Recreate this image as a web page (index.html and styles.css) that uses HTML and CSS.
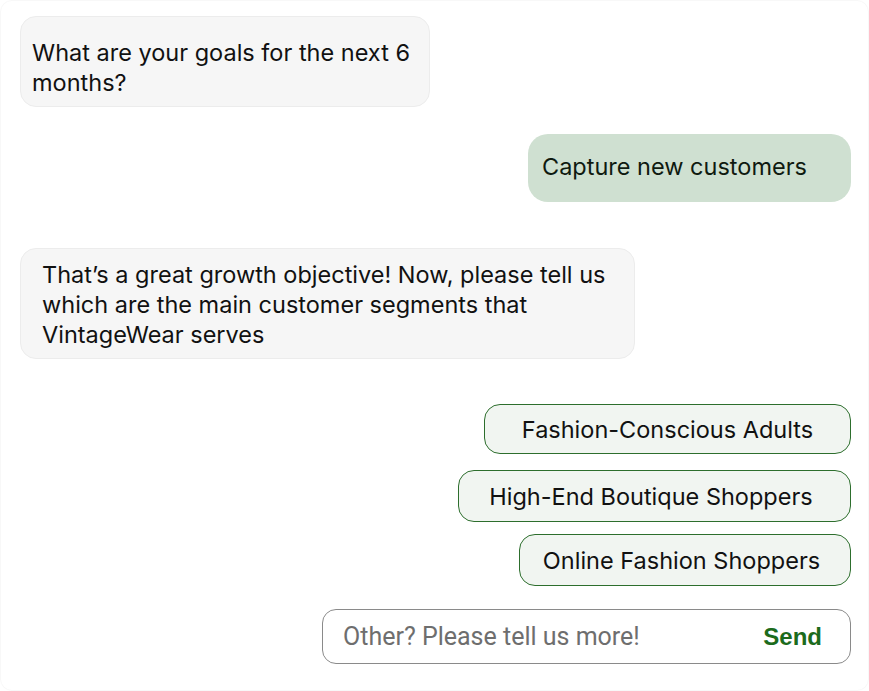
FILE: index.html
```html
<!DOCTYPE html>
<html>
<head>
<meta charset="utf-8">
<link rel="stylesheet" href="styles.css">
</head>
<body>
<div class="chat">
  <div class="msg bot bot-1">What are your goals for the next 6 months?</div>
  <div class="msg user">Capture new customers</div>
  <div class="msg bot bot-2">That’s a great growth objective! Now, please tell us which are the main customer segments that VintageWear serves</div>
  <div class="options">
    <button class="chip chip-1">Fashion-Conscious Adults</button>
    <button class="chip chip-2">High-End Boutique Shoppers</button>
    <button class="chip chip-3">Online Fashion Shoppers</button>
  </div>
  <div class="composer">
    <input class="composer-input" type="text" placeholder="Other? Please tell us more!">
    <button class="send">Send</button>
  </div>
</div>
</body>
</html>
```
FILE: styles.css
```css
html, body {
  margin: 0;
  padding: 0;
  background: #ffffff;
}
body {
  font-family: Inter, "Noto Sans", sans-serif;
  color: #111;
}
.chat {
  box-sizing: border-box;
  width: 869px;
  height: 691px;
  padding: 15px 17px 0 19px;
  display: flex;
  flex-direction: column;
  border: 1px solid #f8f8f8;
  border-radius: 12px;
}
.msg {
  box-sizing: border-box;
  font-size: 23.5px;
  line-height: 30px;
  border-radius: 16px;
}
.bot {
  align-self: flex-start;
  background: #f6f6f6;
  border: 1px solid #ececec;
}
.bot-1 {
  width: 410px;
  height: 91px;
  padding: 21px 11px 7px 11px;
}
.user {
  align-self: flex-end;
  width: 323px;
  height: 68px;
  margin-top: 27px;
  padding: 18px 14px;
  background: #cfe0d1;
  border-radius: 20px;
  color: #0f1a10;
}
.bot-2 {
  width: 615px;
  height: 111px;
  margin-top: 46px;
  padding: 11px 21px 8px 21px;
}
.options {
  margin-top: 45px;
  display: flex;
  flex-direction: column;
  align-items: flex-end;
  gap: 16px;
}
.chip {
  box-sizing: border-box;
  font-family: Inter, "Noto Sans", sans-serif;
  font-size: 23.5px;
  color: #111;
  background: #f1f5f1;
  border: 1px solid #2d6e2d;
  border-radius: 16px;
  padding: 0;
  text-align: center;
}
.chip-1 { width: 367px; height: 50px; }
.chip-2 { width: 393px; height: 52px; padding-right: 7px; }
.chip-3 { width: 332px; height: 52px; margin-top: -4px; padding-right: 7px; }
.composer {
  box-sizing: border-box;
  align-self: flex-end;
  margin-top: 23px;
  width: 529px;
  height: 55px;
  border: 1px solid #8a8a8a;
  border-radius: 14px;
  display: flex;
  align-items: center;
  padding: 0 28px 0 20px;
}
.composer-input {
  flex: 1;
  min-width: 0;
  border: none;
  outline: none;
  background: transparent;
  font-family: Roboto, sans-serif;
  font-size: 25px;
  color: #333;
  padding: 0;
}
.composer-input::placeholder {
  color: #6e6e6e;
}
.send {
  border: none;
  background: transparent;
  padding: 0;
  font-family: "Liberation Sans", Arial, sans-serif;
  font-weight: bold;
  font-size: 24px;
  color: #1c6b1c;
}
```
